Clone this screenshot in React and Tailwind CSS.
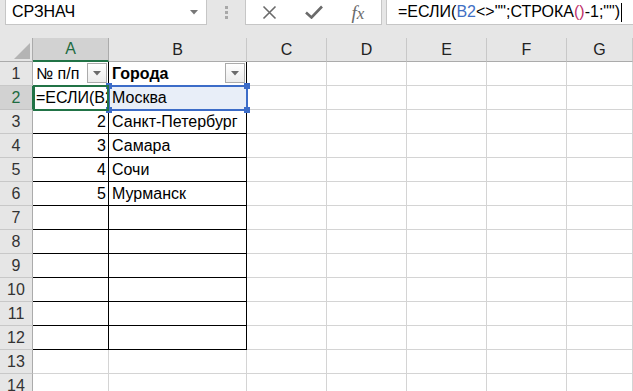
import React from "react";

const cols = [
  { k: "A", w: 76 },
  { k: "B", w: 138 },
  { k: "C", w: 80 },
  { k: "D", w: 80 },
  { k: "E", w: 80 },
  { k: "F", w: 80 },
  { k: "G", w: 66 },
];

const data = {
  1: ["№ п/п", "Города"],
  2: ["=ЕСЛИ(B2", "Москва"],
  3: ["2", "Санкт-Петербург"],
  4: ["3", "Самара"],
  5: ["4", "Сочи"],
  6: ["5", "Мурманск"],
};

function FilterBtn() {
  return (
    <div className="absolute right-[1px] top-[1px] w-[20px] h-[20px] border border-[#ababab] bg-gradient-to-b from-[#ffffff] to-[#ececec] flex items-center justify-center">
      <svg width="8" height="5" viewBox="0 0 8 5">
        <path d="M0 0 L8 0 L4 4.5 Z" fill="#6b6b6b" />
      </svg>
    </div>
  );
}

function Row({ r }) {
  const inTable = r <= 12;
  const selected = r === 2;
  return (
    <div className="flex h-[24px]">
      <div
        className={
          "w-[33px] shrink-0 border-b border-r flex items-center justify-center text-[16px] " +
          (selected
            ? "bg-[#d2d2d2] text-[#1e6b41] border-b-[#c3c3c3] border-r-[#217346]"
            : "bg-[#e6e6e6] text-[#333] border-b-[#c8c8c8] border-r-[#ababab]")
        }
      >
        {r}
      </div>
      {cols.map((c, i) => {
        const tbl = inTable && i < 2;
        const rightBlack = inTable && i <= 1;
        const bottomBlack = tbl;
        const v = data[r] ? data[r][i] : undefined;
        const isNum = r >= 3 && i === 0;
        return (
          <div
            key={c.k}
            style={{ width: c.w }}
            className={
              "shrink-0 relative border-b border-r flex items-center overflow-hidden whitespace-nowrap text-[16px] text-black " +
              (rightBlack ? "border-r-black " : "border-r-[#d4d4d4] ") +
              (bottomBlack ? "border-b-black " : "border-b-[#d4d4d4] ") +
              (isNum ? "justify-end pr-[2px] " : "pl-[3px] ") +
              (r === 1 && i === 1 ? "font-bold " : "") +
              (r === 2 && i === 1 ? "bg-[#e8eef8] " : "bg-white ")
            }
          >
            {v !== undefined && <span>{v}</span>}
            {r === 1 && i < 2 && <FilterBtn />}
          </div>
        );
      })}
    </div>
  );
}

export default function App() {
  const rows = Array.from({ length: 14 }, (_, i) => i + 1);
  return (
    <div
      className="w-[633px] h-[391px] overflow-hidden bg-[#e6e6e6] relative"
      style={{ fontFamily: '"Liberation Sans", Arial, sans-serif' }}
    >
      {/* top bar */}
      <div className="h-[38px] flex items-start">
        <div className="ml-[5px] w-[202px] h-[25px] bg-white border border-t-0 border-[#c6c6c6] flex items-center justify-between pl-[6px] pr-[6px]">
          <span className="text-[16px] text-black">СРЗНАЧ</span>
          <svg width="8" height="5" viewBox="0 0 8 5" className="mr-[2px]">
            <path d="M0 0 L8 0 L4 4.5 Z" fill="#777" />
          </svg>
        </div>
        <div className="w-[38px] h-[25px] flex flex-col items-center justify-center gap-[2px]">
          <div className="w-[3px] h-[3px] bg-[#a8a8a8]" />
          <div className="w-[3px] h-[3px] bg-[#a8a8a8]" />
          <div className="w-[3px] h-[3px] bg-[#a8a8a8]" />
        </div>
        <div className="w-[137px] h-[25px] bg-white border border-t-0 border-[#c6c6c6] flex items-center">
          <div className="w-[46px] flex justify-center">
            <svg width="15" height="15" viewBox="0 0 15 15">
              <path d="M1.5 1.5 L13.5 13.5 M13.5 1.5 L1.5 13.5" stroke="#6a6a6a" strokeWidth="1.6" />
            </svg>
          </div>
          <div className="w-[44px] flex justify-center">
            <svg width="18" height="14" viewBox="0 0 18 14">
              <path d="M1 7.5 L6.5 12.5 L17 1.5" stroke="#6a6a6a" strokeWidth="2.6" fill="none" />
            </svg>
          </div>
          <div className="w-[44px] flex justify-center">
            <span
              className="text-[17px] italic text-[#6a6a6a] leading-none"
              style={{ fontFamily: '"Liberation Serif", "Times New Roman", serif' }}
            >
              <span className="text-[19px]">f</span>x
            </span>
          </div>
        </div>
        <div className="ml-[4px] flex-1 h-[25px] bg-white border border-t-0 border-r-0 border-[#c6c6c6] flex items-center pl-[11px]">
          <span className="text-[16px] text-black whitespace-nowrap">
            =ЕСЛИ(<span className="text-[#3f6fc4]">B2</span>&lt;&gt;"";СТРОКА
            <span className="text-[#c0306a]">()</span>-1;"")
          </span>
          <div className="w-[1px] h-[19px] bg-black ml-[1px]" />
        </div>
      </div>

      {/* column headers */}
      <div className="flex h-[24px]">
        <div className="w-[33px] shrink-0 relative border-r border-b border-[#ababab] bg-[#e6e6e6]">
          <svg width="16" height="16" viewBox="0 0 16 16" className="absolute right-[2px] bottom-[2px]">
            <path d="M16 0 L16 16 L0 16 Z" fill="#b4b4b4" />
          </svg>
        </div>
        {cols.map((c, i) => (
          <div
            key={c.k}
            style={{ width: c.w }}
            className={
              "shrink-0 flex items-center justify-center text-[16px] border-r " +
              (i === 0
                ? "bg-[#d2d2d2] text-[#1e6b41] border-b-2 border-b-[#217346] border-r-[#ababab]"
                : "bg-[#e6e6e6] text-[#222] border-b border-b-[#ababab] border-r-[#c8c8c8]")
            }
          >
            {c.k}
          </div>
        ))}
      </div>

      {/* grid */}
      <div className="relative">
        {rows.map((r) => (
          <Row key={r} r={r} />
        ))}

        {/* B2 reference highlight */}
        <div className="absolute left-[108px] top-[23px] w-[140px] h-[26px] border-2 border-[#3c6cc8] pointer-events-none" />
        <div className="absolute left-[106px] top-[21px] w-[6px] h-[6px] bg-[#3c6cc8]" />
        <div className="absolute left-[244px] top-[21px] w-[6px] h-[6px] bg-[#3c6cc8]" />
        <div className="absolute left-[106px] top-[45px] w-[6px] h-[6px] bg-[#3c6cc8]" />
        <div className="absolute left-[244px] top-[45px] w-[6px] h-[6px] bg-[#3c6cc8]" />

        {/* active cell A2 */}
        <div className="absolute left-[33px] top-[23px] w-[76px] h-[26px] border-2 border-[#217346] pointer-events-none" />
      </div>
    </div>
  );
}
